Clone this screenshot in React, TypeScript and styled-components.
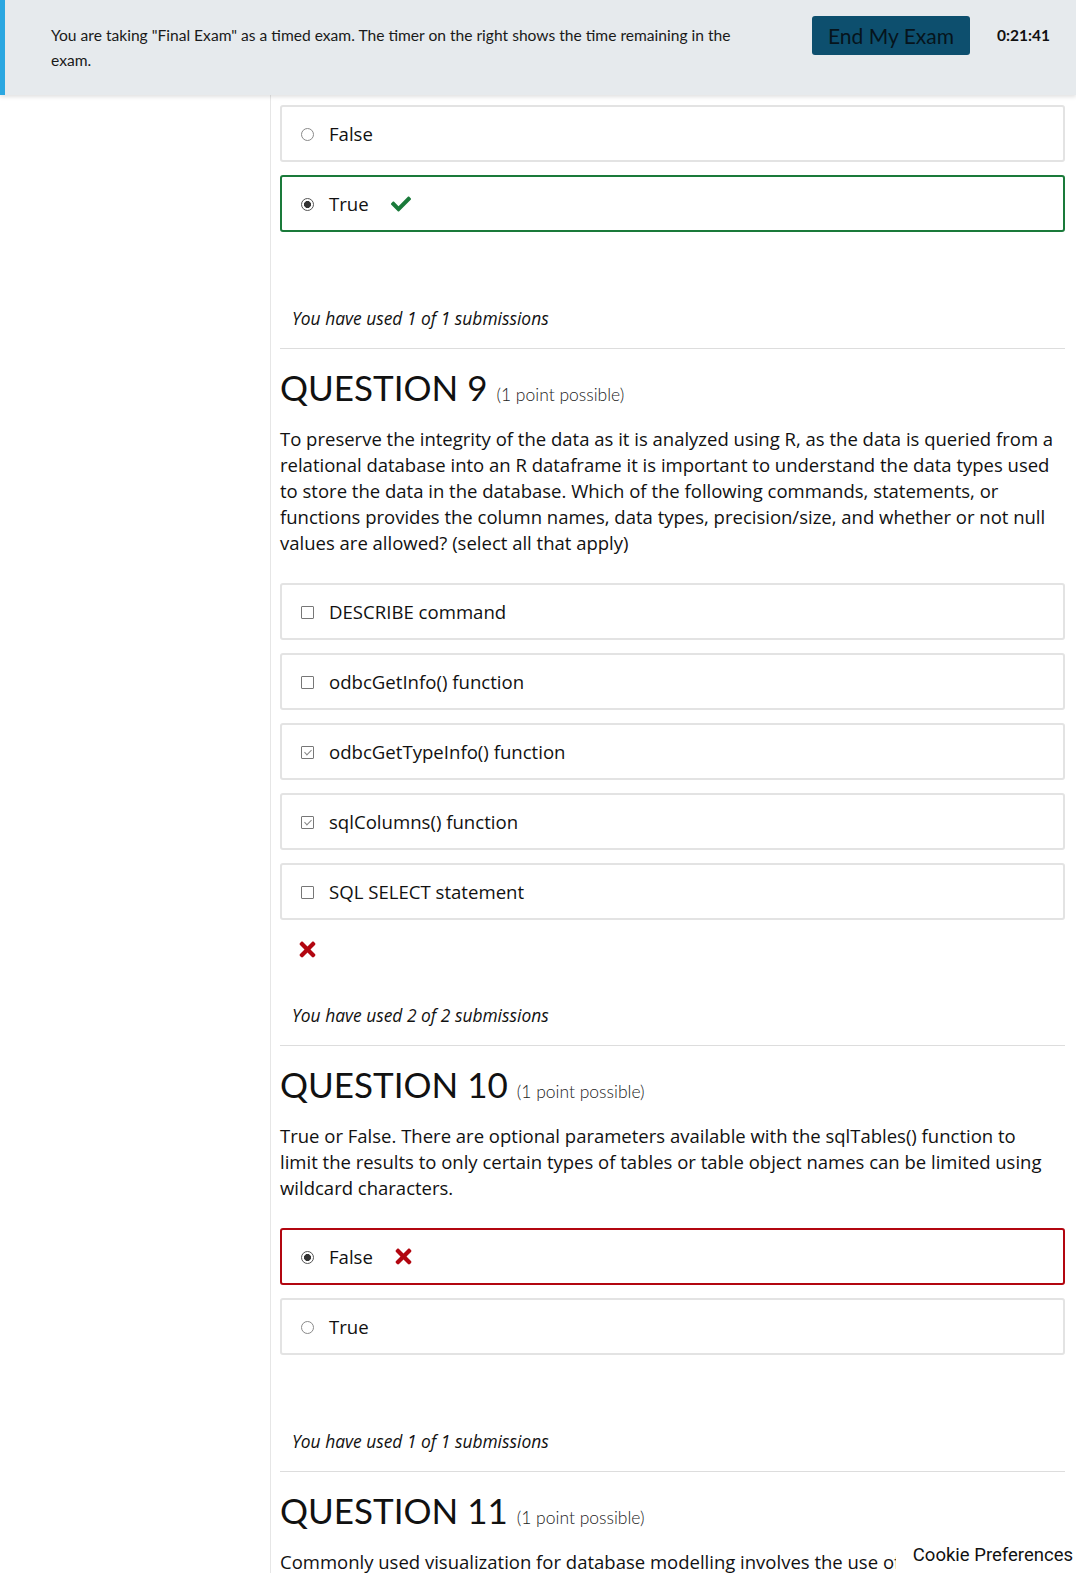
import React from 'react';
import styled, { createGlobalStyle } from 'styled-components';
import { FaCheck, FaTimes } from 'react-icons/fa';

type Status = 'none' | 'correct' | 'incorrect';
type Choice = { label: string; selected?: boolean; status?: Status };
type Question = {
  number: number;
  text: string;
  kind: 'radio' | 'checkbox';
  choices: Choice[];
  resultIcon?: Status;
  used: number;
  total: number;
};

const GlobalStyle = createGlobalStyle`
  html, body {
    margin: 0;
    padding: 0;
    background: #fff;
    color: #111;
    font-family: "Open Sans", "Noto Sans", sans-serif;
  }
  * { box-sizing: border-box; }
`;

const questions: Question[] = [
  {
    number: 9,
    kind: 'checkbox',
    text:
      'To preserve the integrity of the data as it is analyzed using R, as the data is queried from a relational database into an R dataframe it is important to understand the data types used to store the data in the database. Which of the following commands, statements, or functions provides the column names, data types, precision/size, and whether or not null values are allowed? (select all that apply)',
    choices: [
      { label: 'DESCRIBE command' },
      { label: 'odbcGetInfo() function' },
      { label: 'odbcGetTypeInfo() function', selected: true },
      { label: 'sqlColumns() function', selected: true },
      { label: 'SQL SELECT statement' },
    ],
    resultIcon: 'incorrect',
    used: 2,
    total: 2,
  },
  {
    number: 10,
    kind: 'radio',
    text:
      'True or False. There are optional parameters available with the sqlTables() function to limit the results to only certain types of tables or table object names can be limited using wildcard characters.',
    choices: [
      { label: 'False', selected: true, status: 'incorrect' },
      { label: 'True' },
    ],
    used: 1,
    total: 1,
  },
];

export default function App() {
  return (
    <>
      <GlobalStyle />
      <Page>
        <Banner>
          <BannerText>
            You are taking "Final Exam" as a timed exam. The timer on the right shows the time
            remaining in the exam.
          </BannerText>
          <EndButton>End My Exam</EndButton>
          <Timer>0:21:41</Timer>
        </Banner>
        <Body>
          <Sidebar />
          <Main>
            <ChoiceList>
              <ChoiceRow kind="radio" label="False" />
              <ChoiceRow kind="radio" label="True" selected status="correct" />
            </ChoiceList>
            <SubmitSpacer />
            <Submissions>You have used 1 of 1 submissions</Submissions>
            {questions.map((q) => (
              <QuestionBlock key={q.number} q={q} />
            ))}
            <Divider />
            <Heading>
              QUESTION 11 <Points>(1 point possible)</Points>
            </Heading>
            <Prompt>
              Commonly used visualization for database modelling involves the use of which of the
              following diagrams?
            </Prompt>
          </Main>
        </Body>
        <Cookie>Cookie Preferences</Cookie>
      </Page>
    </>
  );
}

function QuestionBlock({ q }: { q: Question }) {
  return (
    <>
      <Divider />
      <Heading>
        QUESTION {q.number} <Points>(1 point possible)</Points>
      </Heading>
      <Prompt>{q.text}</Prompt>
      <ChoiceList>
        {q.choices.map((c) => (
          <ChoiceRow key={c.label} kind={q.kind} {...c} />
        ))}
      </ChoiceList>
      {q.resultIcon === 'incorrect' ? (
        <ResultLine>
          <FaTimes color="#b20610" size={23} />
        </ResultLine>
      ) : (
        <SubmitSpacer />
      )}
      <Submissions>
        You have used {q.used} of {q.total} submissions
      </Submissions>
    </>
  );
}

function ChoiceRow({
  kind,
  label,
  selected,
  status = 'none',
}: Choice & { kind: 'radio' | 'checkbox' }) {
  return (
    <ChoiceBox $status={status}>
      {kind === 'radio' ? <Radio $on={!!selected} /> : <CheckBox $on={!!selected} />}
      <ChoiceLabel>{label}</ChoiceLabel>
      {status === 'correct' && <CorrectMark color="#1a7a3a" size={20} />}
      {status === 'incorrect' && <FaTimes color="#b20610" size={23} />}
    </ChoiceBox>
  );
}

const Page = styled.div`
  position: relative;
  height: 1573px;
  overflow: hidden;
`;

const Banner = styled.header`
  display: flex;
  align-items: flex-start;
  height: 95px;
  padding: 16px 30px 0 46px;
  background: #e6eaed;
  border-left: 5px solid #2ba7e1;
  box-shadow: 0 2px 4px rgba(0, 0, 0, 0.12);
  position: relative;
  z-index: 2;
`;

const BannerText = styled.p`
  margin: 7px 0 0;
  width: 700px;
  flex: none;
  font-family: "Lato", "Noto Sans", sans-serif;
  font-size: 15.6px;
  line-height: 25px;
  color: #1a1a1a;
`;

const EndButton = styled.button`
  margin-left: 61px;
  width: 158px;
  height: 39px;
  flex: none;
  border: none;
  border-radius: 3px;
  background: #0d4f6e;
  color: #06141c;
  font-family: "Lato", "Noto Sans", sans-serif;
  font-size: 21px;
  padding: 0;
`;

const Timer = styled.span`
  margin: 10px 0 0 27px;
  font-family: "Lato", "Noto Sans", sans-serif;
  font-weight: 700;
  font-size: 15.5px;
  color: #111;
`;

const Body = styled.div`
  display: flex;
`;

const Sidebar = styled.aside`
  width: 271px;
  flex: none;
  border-right: 1px solid #e6e6e6;
`;

const Main = styled.main`
  flex: 1;
  padding: 10px 11px 0 9px;
`;

const ChoiceList = styled.div`
  display: flex;
  flex-direction: column;
  gap: 13px;
`;

const ChoiceBox = styled.div<{ $status: Status }>`
  display: flex;
  align-items: center;
  gap: 15px;
  height: 57px;
  padding: 0 18px;
  border-radius: 3px;
  border: 2px solid
    ${(p) =>
      p.$status === 'correct' ? '#1a7a3a' : p.$status === 'incorrect' ? '#b20610' : '#e3e3e3'};
`;

const CorrectMark = styled(FaCheck)`
  margin-left: 3px;
`;

const Radio = styled.span<{ $on: boolean }>`
  width: 13px;
  height: 13px;
  flex: none;
  border-radius: 50%;
  border: 1px solid ${(p) => (p.$on ? '#555' : '#8a8a8a')};
  background: ${(p) => (p.$on ? 'radial-gradient(circle, #333 0 3.2px, #fff 3.8px)' : '#fff')};
  margin-left: 1px;
  margin-top: 2px;
`;

const CheckBox = styled.span<{ $on: boolean }>`
  position: relative;
  width: 13px;
  height: 13px;
  flex: none;
  border: 1px solid #777;
  border-radius: 1px;
  margin-left: 1px;
  margin-top: 2px;
  background: #fff;

  &::after {
    content: '';
    display: ${(p) => (p.$on ? 'block' : 'none')};
    position: absolute;
    left: 3.5px;
    top: 1px;
    width: 3px;
    height: 6px;
    border: solid #888;
    border-width: 0 1px 1px 0;
    transform: rotate(45deg);
  }
`;

const ChoiceLabel = styled.span`
  font-size: 18.6px;
  color: #111;
  margin-right: 4px;
`;

const SubmitSpacer = styled.div`
  height: 73px;
`;

const ResultLine = styled.div`
  height: 82px;
  padding: 18px 0 0 16px;
`;

const Submissions = styled.p`
  margin: 0;
  padding: 1px 0 18px 12px;
  font-style: italic;
  font-size: 17.4px;
  line-height: 24px;
  color: #111;
`;

const Divider = styled.hr`
  margin: 0;
  border: none;
  border-top: 1px solid #ddd;
`;

const Heading = styled.h2`
  margin: 16px 0 0;
  font-family: "Lato", "Noto Sans", sans-serif;
  font-weight: 400;
  font-size: 35px;
  line-height: 44px;
  letter-spacing: 0;
  color: #111;
`;

const Points = styled.span`
  font-family: "Lato", "Noto Sans", sans-serif;
  font-weight: 300;
  font-size: 17.5px;
  letter-spacing: 0;
  color: #222;
`;

const Prompt = styled.p`
  margin: 9px 0 27px;
  padding-right: 10px;
  font-size: 18.5px;
  line-height: 26px;
  color: #111;
`;

const Cookie = styled.div`
  position: absolute;
  right: 0;
  bottom: 0;
  padding: 10px 3px 7px 17px;
  background: #fff;
  font-family: "Roboto", "Liberation Sans", sans-serif;
  font-size: 18.5px;
  color: #111;
  z-index: 3;
`;
